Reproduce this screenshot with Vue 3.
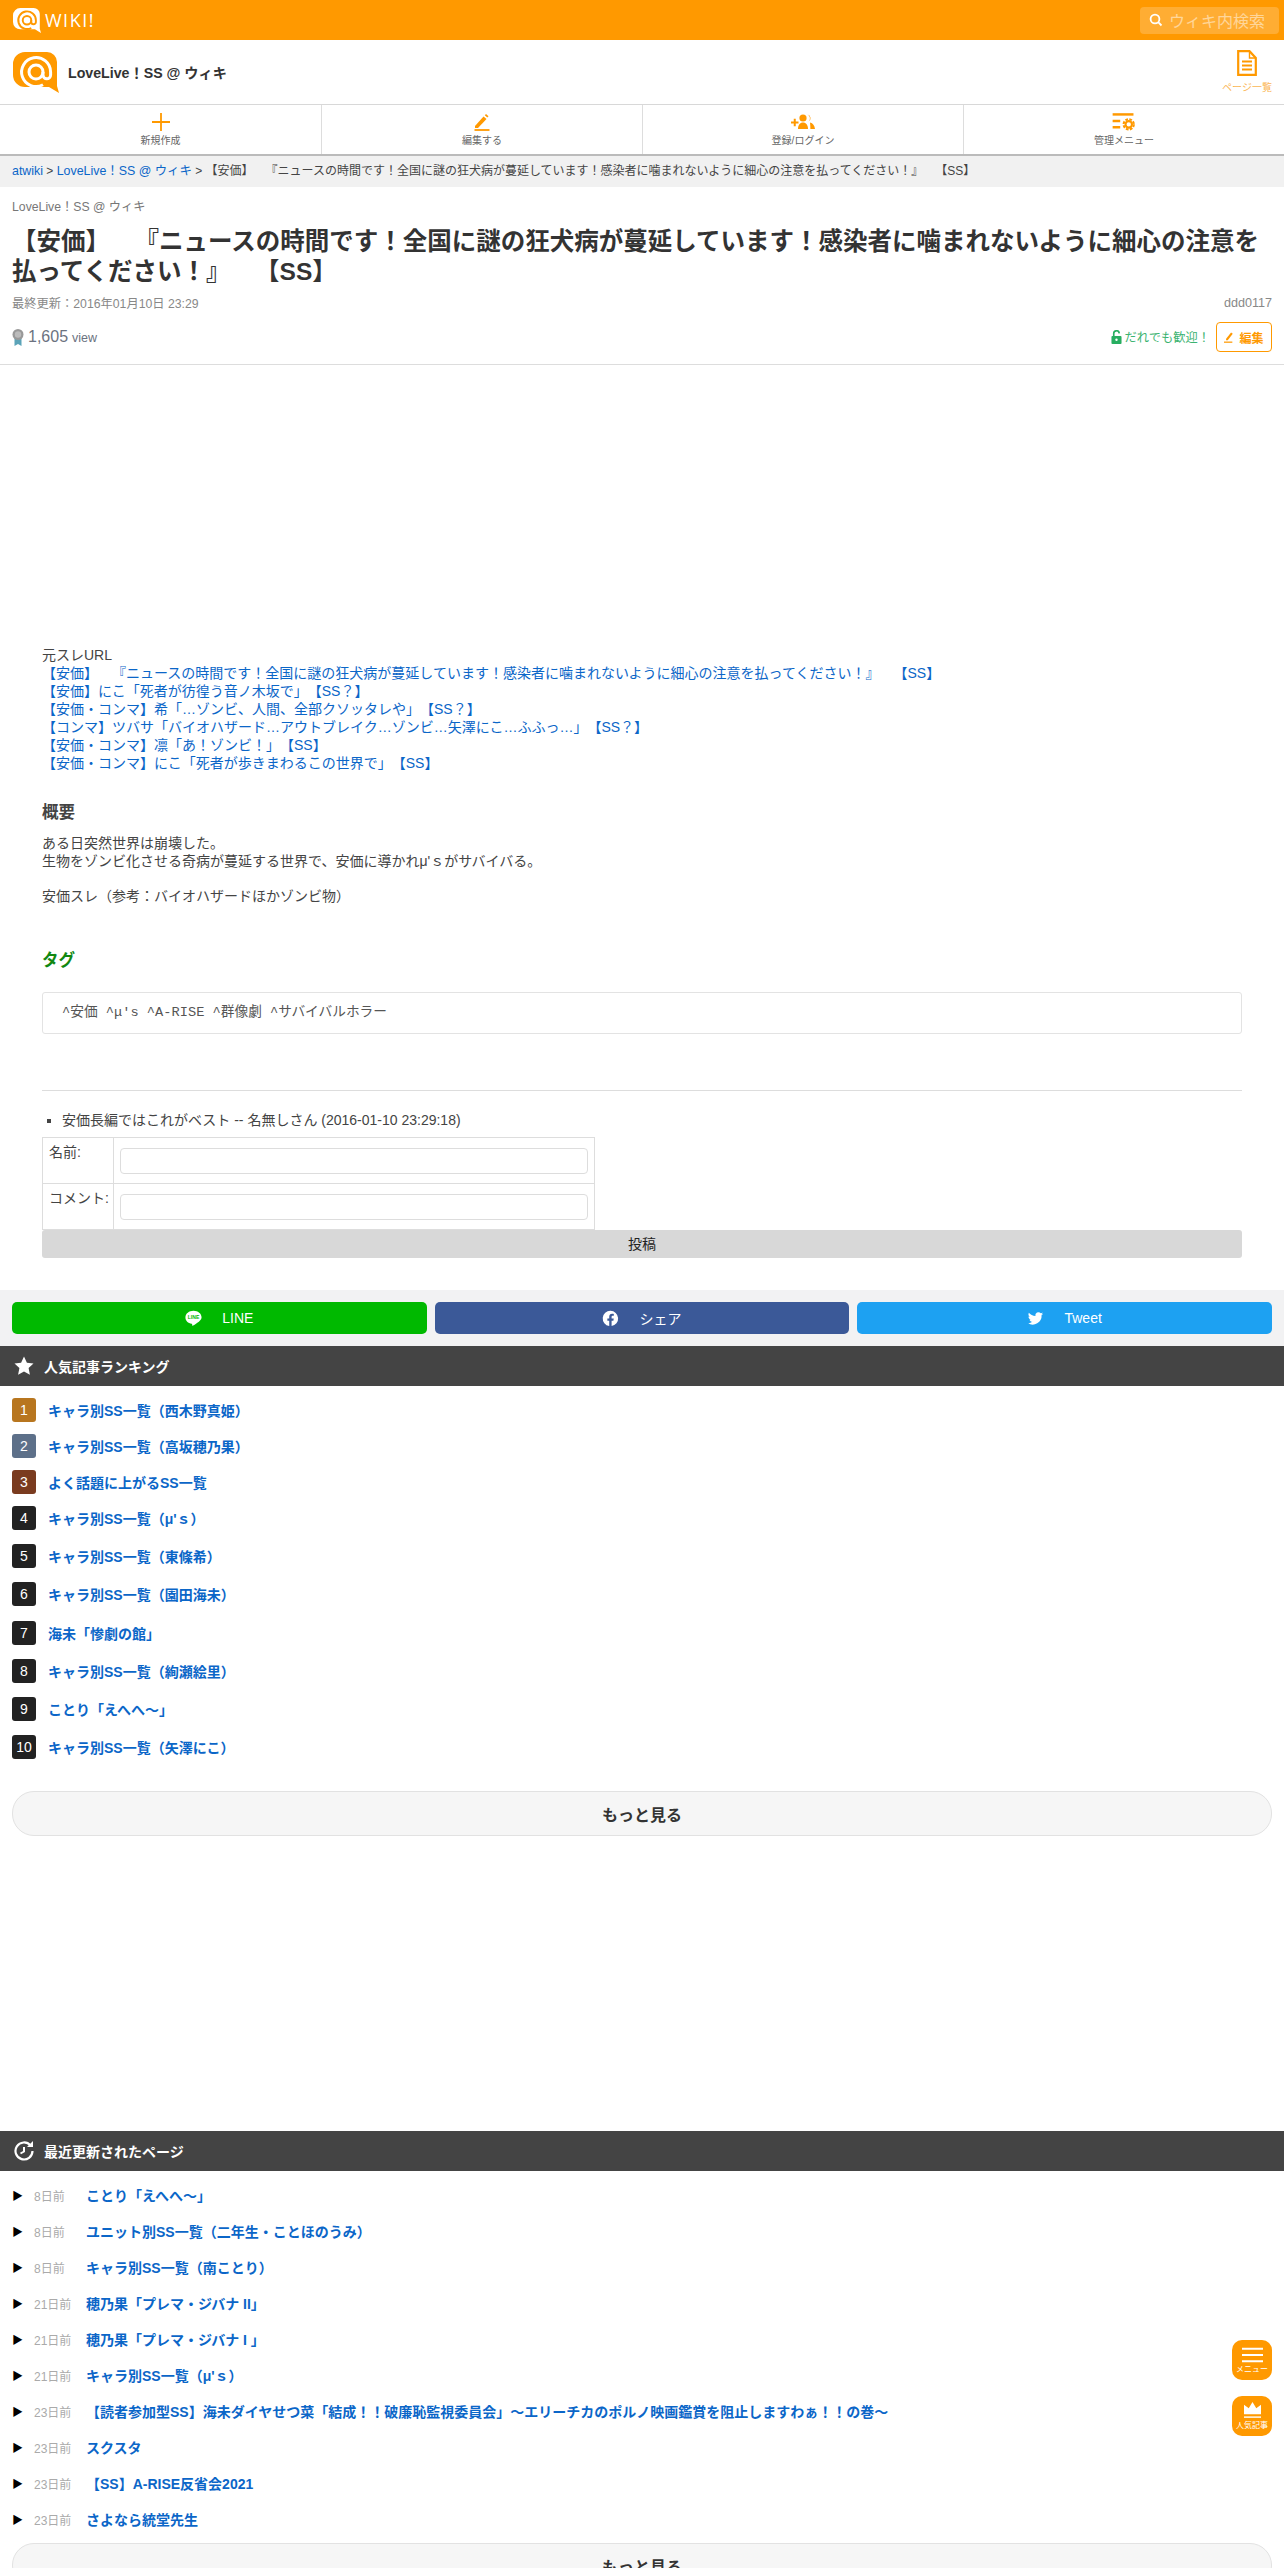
<script setup>
const links = [
  '【安価】　『ニュースの時間です！全国に謎の狂犬病が蔓延しています！感染者に噛まれないように細心の注意を払ってください！』　【SS】',
  '【安価】にこ「死者が彷徨う音ノ木坂で」【SS？】',
  '【安価・コンマ】希「…ゾンビ、人間、全部クソッタレや」【SS？】',
  '【コンマ】ツバサ「バイオハザード…アウトブレイク…ゾンビ…矢澤にこ…ふふっ…」【SS？】',
  '【安価・コンマ】凛「あ！ゾンビ！」【SS】',
  '【安価・コンマ】にこ「死者が歩きまわるこの世界で」【SS】'
]
const ranking = [
  'キャラ別SS一覧（西木野真姫）','キャラ別SS一覧（高坂穂乃果）','よく話題に上がるSS一覧','キャラ別SS一覧（μ\'ｓ）','キャラ別SS一覧（東條希）',
  'キャラ別SS一覧（園田海未）','海未「惨劇の館」','キャラ別SS一覧（絢瀬絵里）','ことり「えへへ～」','キャラ別SS一覧（矢澤にこ）'
]
const recent = [
  ['8日前','ことり「えへへ～」'],['8日前','ユニット別SS一覧（二年生・ことほのうみ）'],['8日前','キャラ別SS一覧（南ことり）'],
  ['21日前','穂乃果「プレマ・ジバナ II」'],['21日前','穂乃果「プレマ・ジバナ I 」'],['21日前','キャラ別SS一覧（μ\'ｓ）'],
  ['23日前','【読者参加型SS】海未ダイヤせつ菜「結成！！破廉恥監視委員会」～エリーチカのポルノ映画鑑賞を阻止しますわぁ！！の巻～'],
  ['23日前','スクスタ'],['23日前','【SS】A-RISE反省会2021'],['23日前','さよなら統堂先生']
]
</script>

<template>
  <div class="page">
    <header class="topbar">
      <div class="brand">
        <svg class="brand-mark" viewBox="0 0 46 41"><path d="M12 0H34a10 10 0 0 1 10 10V34l2 7-10-6H12A12 12 0 0 1 0 23V12A12 12 0 0 1 12 0z" fill="#fff"/><circle cx="23" cy="20" r="7" fill="none" stroke="#f90" stroke-width="3.200"/><path d="M30 20v3a3.800 3.800 0 0 0 7.600 0v-3A14.500 14.500 0 1 0 30 32.800" fill="none" stroke="#f90" stroke-width="3.200"/></svg>
        <span class="brand-text">WIKI!</span>
      </div>
      <div class="search">
        <svg viewBox="0 0 14 14" class="search-ico"><circle cx="6" cy="6" r="4.400" fill="none" stroke="#fff" stroke-width="1.800"/><path d="M9.200 9.200 12.500 12.500" stroke="#fff" stroke-width="1.800"/></svg>
        <span>ウィキ内検索</span>
      </div>
    </header>

    <div class="sitehead">
      <svg class="site-logo" viewBox="0 0 46 41"><path d="M12 0H34a10 10 0 0 1 10 10V34l2 7-10-6H12A12 12 0 0 1 0 23V12A12 12 0 0 1 12 0z" fill="#f90"/><circle cx="23" cy="20" r="7" fill="none" stroke="#fff" stroke-width="3"/><path d="M30 20v3a3.800 3.800 0 0 0 7.600 0v-3A14.500 14.500 0 1 0 30 32.800" fill="none" stroke="#fff" stroke-width="3"/></svg>
      <span class="site-name">LoveLive！SS @ ウィキ</span>
      <div class="pagelist">
        <svg viewBox="0 0 20 26" class="pagelist-ico"><path d="M1.200 1.200h11.300L18.800 8v16.800H1.200z" fill="none" stroke="#f90" stroke-width="2.200"/><path d="M12.500 1.200V8h6.300" fill="none" stroke="#f90" stroke-width="1.400"/><path d="M5 11.500h10M5 15.500h10M5 19.500h10" stroke="#f90" stroke-width="1.800"/></svg>
        <span>ページ一覧</span>
      </div>
    </div>

    <nav class="nav">
      <div class="nav-item">
        <svg viewBox="0 0 18 18" class="nav-ico"><path d="M9 0v18M0 9h18" stroke="#f90" stroke-width="1.800"/></svg>
        <span>新規作成</span>
      </div>
      <div class="nav-item">
        <svg viewBox="0 0 18 18" class="nav-ico"><path d="M2 13 10.500 3.500 13.500 6 5 15H2z" fill="#f90"/><path d="M11.800 2.200l1.200-1.200 2.500 2.200-1.200 1.300z" fill="#f90"/><path d="M1.500 17h15" stroke="#f90" stroke-width="1.800"/></svg>
        <span>編集する</span>
      </div>
      <div class="nav-item">
        <svg viewBox="0 0 24 18" class="nav-ico nav-ico-w"><path d="M0 9.500h7.500M3.750 5.700v7.600" stroke="#f90" stroke-width="2"/><circle cx="12" cy="5" r="3.600" fill="#f90"/><path d="M7 16c0-4 2-6.500 5-6.500s5 2.500 5 6.500z" fill="#f90"/><path d="M16.500 1.600a3.600 3.600 0 0 1 1 6.800 4 4 0 0 0-1-6.800zM19 9.500c3 .8 4.500 3 5 6.500h-4.600c0-2.500-.2-4.500-.4-6.500z" fill="#f90"/></svg>
        <span>登録/ログイン</span>
      </div>
      <div class="nav-item">
        <svg viewBox="0 0 24 19" class="nav-ico nav-ico-w"><path d="M0 1.500h22" stroke="#f90" stroke-width="2.600"/><path d="M0 8.500h8M0 15h8" stroke="#f90" stroke-width="2.600"/><circle cx="17" cy="12" r="5.400" fill="none" stroke="#f90" stroke-width="2.200" stroke-dasharray="2.800 1.440"/><circle cx="17" cy="12" r="3.400" fill="none" stroke="#f90" stroke-width="2.200"/></svg>
        <span>管理メニュー</span>
      </div>
    </nav>

    <div class="crumbs"><a>atwiki</a> &gt; <a>LoveLive！SS @ ウィキ</a> &gt; 【安価】　『ニュースの時間です！全国に謎の狂犬病が蔓延しています！感染者に噛まれないように細心の注意を払ってください！』　【SS】</div>

    <section class="titlebox">
      <div class="wiki-label">LoveLive！SS @ ウィキ</div>
      <h1>【安価】　『ニュースの時間です！全国に謎の狂犬病が蔓延しています！感染者に噛まれないように細心の注意を払ってください！』　【SS】</h1>
      <div class="meta"><span>最終更新：2016年01月10日 23:29</span><span class="owner">ddd0117</span></div>
      <div class="stats">
        <div class="views">
          <svg viewBox="0 0 12 18" class="medal"><path d="M2.500 9v9l3.500-2 3.500 2V9z" fill="#5ba3b8"/><circle cx="6" cy="6.500" r="5.500" fill="#999"/><circle cx="6" cy="6.500" r="3.200" fill="#bbb"/></svg>
          <span class="count">1,605</span> <span class="view-unit">view</span>
        </div>
        <div class="actions">
          <svg viewBox="0 0 12 15" class="lock"><path d="M3 7V4a3 3 0 0 1 6-.5" fill="none" stroke="#27ae60" stroke-width="1.800"/><rect x="0.500" y="6.500" width="11" height="8.500" rx="1" fill="#27ae60"/><circle cx="6" cy="10.500" r="1.300" fill="#fff"/></svg>
          <span class="welcome">だれでも歓迎！</span>
          <div class="edit-btn">
            <svg viewBox="0 0 12 14" class="edit-ico"><path d="M2.500 9 8.500 1.500l2 1.500L4.500 11h-2z" fill="#f90"/><path d="M0 13.200h10" stroke="#f90" stroke-width="1.500"/></svg>
            編集
          </div>
        </div>
      </div>
    </section>

    <main class="content">
      <div class="ad-gap"></div>
      <div class="sources">
        <div>元スレURL</div>
        <a v-for="l in links" :key="l">{{ l }}</a>
      </div>
      <h2>概要</h2>
      <p>ある日突然世界は崩壊した。<br>生物をゾンビ化させる奇病が蔓延する世界で、安価に導かれμ'ｓがサバイバる。<br><br>安価スレ（参考：バイオハザードほかゾンビ物）</p>
      <h3>タグ</h3>
      <pre class="tags">^安価 ^μ's ^A-RISE ^群像劇 ^サバイバルホラー</pre>
      <hr>
      <ul class="comments"><li>安価長編ではこれがベスト -- 名無しさん (2016-01-10 23:29:18)</li></ul>
      <table class="form">
        <tbody>
          <tr><td class="lab">名前:</td><td class="field"><input type="text"></td></tr>
          <tr><td class="lab">コメント:</td><td class="field"><input type="text"></td></tr>
        </tbody>
      </table>
      <div class="post">投稿</div>
    </main>

    <div class="share">
      <div class="sbtn line">
        <svg viewBox="0 0 20 20" class="sico"><path d="M10 1C4.800 1 .5 4.300.5 8.800c0 3.800 3.200 6.700 7.400 7.500.8.200.5 1.500.6 2.200.1.700 2.800-1 6-3.400 2.500-1.900 5-3.800 5-6.300C19.500 4.300 15.200 1 10 1z" fill="#fff"/><text x="10" y="10.800" text-anchor="middle" font-size="6" font-weight="700" fill="#00b900" font-family="Liberation Sans">LINE</text></svg>
        LINE
      </div>
      <div class="sbtn fb">
        <svg viewBox="0 0 20 20" class="sico"><path d="M10 1a9 9 0 0 0-1.500 17.900v-6.300H6.300V10h2.200V8c0-2.300 1.300-3.500 3.400-3.500 1 0 2 .2 2 .2v2.200h-1.100c-1.100 0-1.500.7-1.500 1.400V10h2.500l-.4 2.600h-2.100v6.300A9 9 0 0 0 10 1z" fill="#fff"/></svg>
        シェア
      </div>
      <div class="sbtn tw">
        <svg viewBox="0 0 20 20" class="sico"><path d="M19 4.300c-.7.300-1.400.5-2.100.6.800-.5 1.300-1.200 1.600-2-.7.400-1.500.7-2.300.9a3.700 3.700 0 0 0-6.300 3.400C6.800 7 4 5.500 2.200 3.200c-1 1.700-.5 3.800 1.100 4.900-.6 0-1.100-.2-1.600-.5 0 1.800 1.200 3.300 2.900 3.700-.5.100-1.100.2-1.700.1.500 1.500 1.800 2.500 3.400 2.500A7.400 7.400 0 0 1 1 15.400 10.500 10.500 0 0 0 17.200 6c.7-.5 1.300-1 1.800-1.700z" fill="#fff"/></svg>
        Tweet
      </div>
    </div>

    <div class="barhead">
      <svg viewBox="0 0 20 20" class="bar-ico"><path d="M10 .5l2.900 6.200 6.600.8-4.900 4.600 1.300 6.700L10 15.500l-5.900 3.300 1.300-6.700L.5 7.500l6.600-.8z" fill="#fff"/></svg>
      人気記事ランキング
    </div>
    <ol class="rank">
      <li v-for="(r, i) in ranking" :key="r + i" :class="{ tall: i > 2 }">
        <span class="badge" :class="'b' + (i + 1)">{{ i + 1 }}</span>
        <a>{{ r }}</a>
      </li>
    </ol>
    <div class="more">もっと見る</div>

    <div class="spacer"></div>

    <div class="barhead">
      <svg viewBox="0 0 20 20" class="bar-ico"><path d="M16.500 4.500A8.500 8.500 0 1 0 18.500 10" fill="none" stroke="#fff" stroke-width="2.200"/><path d="M13 6h6V0z" fill="#fff"/><path d="M10 6v4.500l-3.500 2" fill="none" stroke="#fff" stroke-width="2"/></svg>
      最近更新されたページ
    </div>
    <ul class="recent">
      <li v-for="r in recent" :key="r[1]">
        <span class="tri">▶</span>
        <span class="ago">{{ r[0] }}</span>
        <a>{{ r[1] }}</a>
      </li>
    </ul>
    <div class="more">もっと見る</div>

    <div class="float f1">
      <svg viewBox="0 0 22 16" class="f-ico"><path d="M0 2h22M0 8.500h22M0 15h22" stroke="#fff" stroke-width="2"/></svg>
      <span>メニュー</span>
    </div>
    <div class="float f2">
      <svg viewBox="0 0 20 18" class="f-ico"><path d="M1 3l5 3.500L10 0l4 6.500L19 3v10H1z" fill="#fff"/><path d="M1 16h18" stroke="#fff" stroke-width="1.500"/></svg>
      <span>人気記事</span>
    </div>
  </div>
</template>

<style>
html, body { margin: 0; padding: 0; background: #fff; }
</style>

<style scoped>
.page {
  position: relative;
  width: 1284px;
  height: 2568px;
  overflow: hidden;
  font-family: "Liberation Sans", "Noto Sans CJK JP", sans-serif;
  font-size: 14px;
  color: #333;
  background: #fff;
  text-spacing-trim: space-all;
}
a { color: #0b66c8; text-decoration: none; }
.topbar { height: 40px; background: #f90; display: flex; align-items: center; justify-content: space-between; padding: 0 5px 0 13px; }
.brand { display: flex; align-items: center; gap: 4px; }
.brand-mark { width: 28px; height: 25px; }
.brand-text { color: #fff; font-size: 18px; letter-spacing: 1.500px; font-family: "Open Sans", sans-serif; line-height: 1; }
.search { width: 139px; height: 27px; box-sizing: border-box; border-radius: 4px; background: rgba(255,255,255,.2); display: flex; align-items: center; gap: 6px; padding-left: 9px; color: rgba(255,255,255,.5); font-size: 16px; }
.search-ico { width: 14px; height: 14px; }
.sitehead { height: 64px; box-sizing: border-box; display: flex; align-items: center; padding: 0 12px 0 13px; }
.site-logo { width: 46px; height: 41px; }
.site-name { margin-left: 9px; font-size: 14.200px; font-weight: 700; color: #333; }
.pagelist { margin-left: auto; width: 50px; display: flex; flex-direction: column; align-items: center; gap: 3px; color: #fbb552; font-size: 10px; white-space: nowrap; }
.pagelist-ico { width: 20px; height: 26px; }
.nav { height: 49px; display: grid; grid-template-columns: repeat(4, 1fr); border-top: 1px solid #d8d8d8; border-bottom: 2px solid #bbb; }
.nav-item { display: flex; flex-direction: column; align-items: center; justify-content: center; gap: 4px; font-size: 10px; line-height: 12px; color: #666; border-left: 1px solid #ddd; }
.nav-item:first-child { border-left: 0; }
.nav-ico { width: 18px; height: 18px; }
.nav-ico-w { width: 24px; }
.crumbs { height: 31px; line-height: 31px; padding-left: 12px; background: #f1f1f1; font-size: 12px; color: #444; white-space: nowrap; }
.crumbs a { font-size: 12.400px; }
.titlebox { padding: 10px 12px 0; height: 178px; box-sizing: border-box; border-bottom: 1px solid #ddd; }
.wiki-label { font-size: 12.250px; color: #777; line-height: 20px; }
h1 { margin: 10px 0 0; font-size: 24.500px; line-height: 30px; font-weight: 700; color: #333; }
.meta { display: flex; justify-content: space-between; font-size: 12.250px; color: #888; margin-top: 8px; line-height: 18px; }
.owner { font-size: 12.600px; margin-top: -1px; }
.stats { display: flex; justify-content: space-between; align-items: center; margin-top: 9px; }
.views { display: flex; align-items: center; gap: 4px; color: #6b7280; }
.medal { width: 12px; height: 18px; }
.count { font-size: 16px; }
.view-unit { font-size: 12.500px; margin-top: 2px; }
.actions { display: flex; align-items: center; gap: 3px; }
.lock { width: 11px; height: 14px; }
.welcome { color: #3cb371; font-size: 12.250px; }
.edit-btn { margin-left: 3px; width: 56px; height: 30px; box-sizing: border-box; border: 1px solid #f90; border-radius: 4px; color: #f90; font-size: 12px; font-weight: 700; display: flex; align-items: center; justify-content: center; gap: 5px; }
.edit-ico { width: 10px; height: 12px; }
.content { padding: 0 42px; height: 925px; box-sizing: border-box; font-size: 14px; line-height: 18px; color: #444; }
.ad-gap { height: 281px; }
.sources a { display: block; }
h2 { font-size: 16.500px; margin: 0; padding-top: 29px; line-height: 22px; color: #444; }
p { margin: 0; padding-top: 12px; color: #444; line-height: 17.500px; }
h3 { margin: 0; padding-top: 44px; font-size: 16.500px; line-height: 22px; color: #118811; }
.tags { margin: 21px 0 0; height: 42px; box-sizing: border-box; border: 1px solid #e3e3e3; border-radius: 3px; padding: 0 19px; line-height: 40px; font-family: "Liberation Mono", "Noto Sans CJK JP", monospace; font-size: 13.700px; color: #555; }
hr { margin: 56px 0 0; border: 0; border-top: 1px solid #ddd; }
.comments { margin: 20px 0 0; padding-left: 20px; list-style: square; color: #444; }
.form { border-collapse: collapse; margin-top: 8px; width: 553px; table-layout: fixed; }
.form td { border: 1px solid #ddd; }
.form .field { padding: 10px 6px 9px; }
.form .lab { box-sizing: border-box; width: 71px; vertical-align: top; padding: 4px 6px; color: #444; white-space: nowrap; line-height: 20px; }
.form input { display: block; width: 100%; height: 26px; box-sizing: border-box; border: 1px solid #ddd; border-radius: 4px; background: #fff; padding: 0; }
.post { height: 28px; line-height: 28px; text-align: center; background: #d8d8d8; border-radius: 3px; font-size: 14px; color: #222; }
.share { height: 56px; box-sizing: border-box; padding: 12px; background: #f2f2f3; display: grid; grid-template-columns: repeat(3, 1fr); gap: 8px; }
.sbtn { border-radius: 5px; color: #fff; font-size: 14px; display: flex; align-items: center; justify-content: center; gap: 20px; height: 32px; }
.sico { width: 17px; height: 17px; }
.line { background: #00b900; }
.fb { background: #3b5998; }
.tw { background: #1da1f2; }
.barhead { height: 40px; background: #444; color: #fff; font-size: 14px; font-weight: 700; display: flex; align-items: center; gap: 10px; padding-left: 14px; }
.bar-ico { width: 20px; height: 20px; }
.rank { list-style: none; margin: 0; padding: 12px 12px 0; }
.rank li { display: flex; align-items: center; height: 24px; margin-bottom: 12px; gap: 12px; }
.rank li.tall { margin-bottom: 14.200px; }
.rank li:last-child { margin-bottom: 0; }
.badge { width: 24px; height: 24px; border-radius: 3px; color: #fff; background: #222; font-size: 14px; display: flex; align-items: center; justify-content: center; flex: none; }
.b1 { background: #b8761f; }
.b2 { background: #5d7089; }
.b3 { background: #7a3b1f; }
.rank a, .recent a { font-size: 14px; font-weight: 700; }
.more { margin: 0 12px; height: 45px; box-sizing: border-box; border: 1px solid #e2e2e2; border-radius: 22px; background: #f6f6f6; color: #333; font-size: 16px; font-weight: 700; display: flex; align-items: center; justify-content: center; }
.rank + .more { margin-top: 32px; }
.spacer { height: 295px; }
.recent { list-style: none; margin: 0; padding: 6px 12px 0; }
.recent li { height: 36px; display: flex; align-items: center; }
.tri { width: 22px; font-size: 11px; color: #000; flex: none; }
.ago { width: 52px; flex: none; color: #aaa; font-size: 12px; }
.recent + .more { margin-top: 6px; }
.float { position: absolute; left: 1232px; width: 40px; height: 40px; border-radius: 10px; background: #f90; color: #fff; font-size: 8px; line-height: 10px; display: flex; flex-direction: column; align-items: center; justify-content: center; gap: 2px; white-space: nowrap; }
.f1 { top: 2340px; }
.f2 { top: 2396px; }
.f-ico { width: 21px; height: 17px; }
</style>
